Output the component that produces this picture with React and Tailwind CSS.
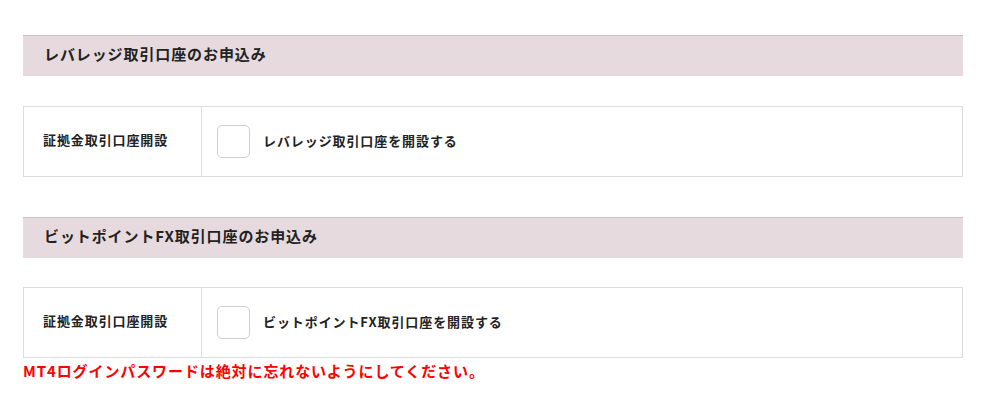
const FONT = { fontFamily: '"Noto Sans CJK JP", "Noto Sans", sans-serif' };

function SectionHeader({ title }) {
  return (
    <div className="h-[41px] border-t border-[#c6c3c4] bg-[#e6dade] flex items-center pl-[21px] pb-[3px]">
      <h2 className="text-[15px] font-bold tracking-[0.06em] text-[#222]">{title}</h2>
    </div>
  );
}

function AccountRow({ label, option }) {
  return (
    <div className="flex h-[71px] border border-[#dcdcdc]">
      <div className="w-[178px] shrink-0 border-r border-[#dcdcdc] flex items-center pl-[19px] pb-[3px]">
        <span className="text-[13px] font-bold tracking-[0.07em] text-[#222]">{label}</span>
      </div>
      <label className="flex items-center pl-[15px] gap-[13px]">
        <span className="w-[33px] h-[33px] rounded-[5px] border border-[#cfcfcf] bg-white" />
        <span className="text-[13px] font-bold tracking-[0.07em] text-[#222] -mt-[2px]">{option}</span>
      </label>
    </div>
  );
}

export default function App() {
  return (
    <div className="bg-white w-[988px] h-[401px] pl-[23px] pr-[25px] pt-[35px]" style={FONT}>
      <SectionHeader title="レバレッジ取引口座のお申込み" />
      <div className="mt-[30px]">
        <AccountRow label="証拠金取引口座開設" option="レバレッジ取引口座を開設する" />
      </div>
      <div className="mt-[40px]">
        <SectionHeader title="ビットポイントFX取引口座のお申込み" />
      </div>
      <div className="mt-[29px]">
        <AccountRow label="証拠金取引口座開設" option="ビットポイントFX取引口座を開設する" />
      </div>
      <p className="text-[15px] font-bold tracking-[0.06em] text-[#ff0000] leading-[26px]">
        MT4ログインパスワードは絶対に忘れないようにしてください。
      </p>
    </div>
  );
}
